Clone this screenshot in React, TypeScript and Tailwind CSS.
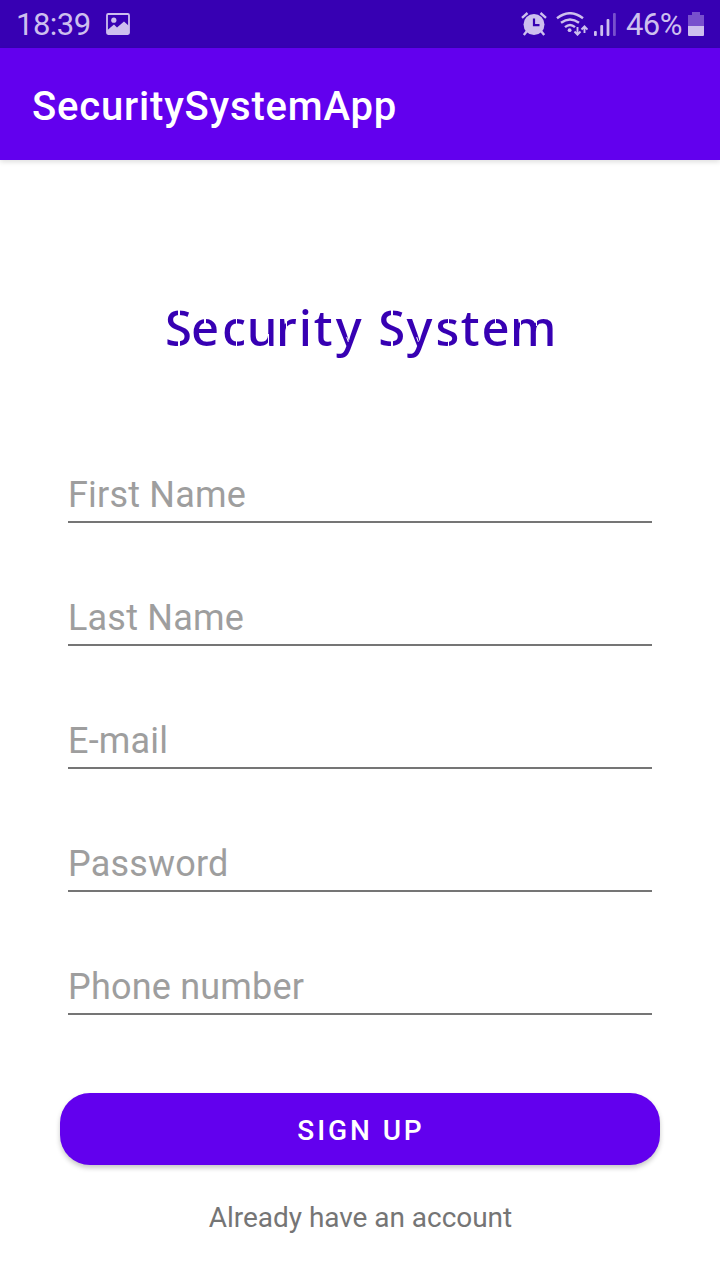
const fields = [
  { label: "First Name", type: "text" },
  { label: "Last Name", type: "text" },
  { label: "E-mail", type: "email" },
  { label: "Password", type: "password" },
  { label: "Phone number", type: "tel" },
];

type Letter = { ch: string; gap: string; cuts: string[] };

// Each letter carries its own tracking and the stencil cuts that cross it.
const title: Letter[] = [
  { ch: "S", gap: "tracking-[-0.9px]", cuts: ["left-[13px] top-[13px] h-[11px] w-[1.5px]", "left-[13px] top-[40px] h-[14px] w-[1.5px]"] },
  { ch: "e", gap: "tracking-[2.7px]", cuts: ["left-[13px] top-[22px] h-[9px] w-[1.5px]"] },
  { ch: "c", gap: "tracking-[0.8px]", cuts: ["left-[14px] top-[22px] h-[9px] w-[1.5px]", "left-[14px] top-[44px] h-[10px] w-[1.5px]"] },
  { ch: "u", gap: "tracking-[-1.4px]", cuts: ["left-[21px] top-[40px] h-[14px] w-[1px]"] },
  { ch: "r", gap: "tracking-[2px]", cuts: ["left-[10px] top-[22px] h-[12px] w-[1px]"] },
  { ch: "i", gap: "tracking-[1.7px]", cuts: [] },
  { ch: "t", gap: "tracking-[3.3px]", cuts: [] },
  { ch: "y", gap: "tracking-[0px]", cuts: ["left-[11px] top-[43px] h-[5px] w-[1px] -rotate-[20deg]"] },
  { ch: " ", gap: "tracking-[3.9px]", cuts: [] },
  { ch: "S", gap: "tracking-[1.1px]", cuts: ["left-[13px] top-[13px] h-[11px] w-[1.5px]", "left-[13px] top-[40px] h-[14px] w-[1.5px]"] },
  { ch: "y", gap: "tracking-[3.3px]", cuts: ["left-[11px] top-[43px] h-[5px] w-[1px] -rotate-[20deg]"] },
  { ch: "s", gap: "tracking-[1.3px]", cuts: ["left-[12px] top-[22px] h-[9px] w-[1.5px]", "left-[12px] top-[42px] h-[12px] w-[1.5px]"] },
  { ch: "t", gap: "tracking-[2px]", cuts: [] },
  { ch: "e", gap: "tracking-[0.3px]", cuts: ["left-[13px] top-[22px] h-[9px] w-[1.5px]"] },
  { ch: "m", gap: "tracking-[0px]", cuts: ["left-[10px] top-[22px] h-[12px] w-[1px]", "left-[26px] top-[26px] h-[6px] w-[1px]"] },
];

function PictureIcon() {
  return (
    <svg className="ml-[15px] h-6 w-6" viewBox="0 0 24 24" fill="none">
      <rect x="1" y="2" width="22" height="20" rx="1.2" stroke="#cdbfee" strokeWidth="1.8" />
      <circle cx="7.8" cy="8.2" r="2.6" fill="#cdbfee" />
      <path d="M1 18.5L5 15L8 12.500L11 15.500L18 9.500L23 14V22H1Z" fill="#cdbfee" />
    </svg>
  );
}

function AlarmIcon() {
  return (
    <svg className="h-6 w-[26px]" viewBox="0 0 26 24" fill="none">
      <path d="M6 19L2.800 23M20 19L23.200 23" stroke="#cdbfee" strokeWidth="2.4" />
      <path d="M1 5.8L6.5 1M25 5.8L19.500 1" stroke="#cdbfee" strokeWidth="2.4" />
      <circle cx="13" cy="12.500" r="10.500" fill="#cdbfee" />
      <path d="M13 6.500V13.200H18.500" stroke="#3700b3" strokeWidth="2.200" />
    </svg>
  );
}

function WifiIcon() {
  return (
    <svg className="ml-[9px] h-6 w-8" viewBox="0 0 32 24" fill="none" stroke="#cdbfee">
      <path d="M1 6.200Q14 -3.800 27 6.200M5 10.800Q14 4 23 10.800M9 15.200Q14 10.800 19 15.200" strokeWidth="2.400" />
      <circle cx="13.600" cy="18.200" r="1.900" fill="#cdbfee" stroke="none" />
      <path d="M21.500 15V22M18.500 19.500L21.500 22.700L24.500 19.500M28.500 21V14.500M25.500 17.500L28.500 14.300L31.500 17.500" strokeWidth="1.900" />
    </svg>
  );
}

function SignalIcon() {
  return (
    <svg className="ml-[6px] h-6 w-[22px]" viewBox="0 0 22 24" fill="#cdbfee">
      <rect x="0" y="19" width="2.800" height="5" rx="1" />
      <rect x="6.300" y="13" width="2.800" height="11" rx="1" />
      <rect x="12.600" y="7" width="2.800" height="17" rx="1" />
      <rect x="19" y="1" width="2.800" height="23" rx="1" fill="#7850cd" />
    </svg>
  );
}

function BatteryIcon() {
  return (
    <svg className="ml-[6px] h-6 w-4" viewBox="0 0 16 24">
      <path d="M4 0H12V3H16V14H0V3H4Z" fill="#7850cd" />
      <path d="M0 14H16V23Q16 24 15 24H1Q0 24 0 23Z" fill="#cdbfee" />
    </svg>
  );
}

export default function App() {
  return (
    <div className="flex h-[1280px] w-[720px] flex-col bg-white font-[Roboto,sans-serif]">
      <div className="flex h-12 shrink-0 items-center justify-between bg-[#3700b3] pr-4 pl-4 text-[31px] leading-[48px] text-[#cdbfee]">
        <div className="flex items-center">
          <span className="pt-[2px] tracking-[-0.5px]">18:39</span>
          <PictureIcon />
        </div>
        <div className="flex items-center">
          <AlarmIcon />
          <WifiIcon />
          <SignalIcon />
          <span className="ml-[10px] pt-[2px] tracking-[-0.5px]">46%</span>
          <BatteryIcon />
        </div>
      </div>
      <header className="flex h-28 shrink-0 items-center bg-[#6200ee] px-8 pt-[6px] shadow-[0_2px_5px_rgba(0,0,0,0.13)]">
        <h1 className="text-[40px] leading-[48px] font-medium tracking-[0.82px] text-white">SecuritySystemApp</h1>
      </header>
      <main className="flex flex-1 flex-col px-[60px]">
        <div className="mt-[129px] flex h-[76px] pl-[105px]">
          <h2 className="font-['Noto_Sans',sans-serif] text-[49px] leading-[76px] font-medium whitespace-pre text-[#3700b3]">
            {title.map((l, i) => (
              <span key={i} className={`relative ${l.gap}`}>
                {l.ch}
                {l.cuts.map((c) => (
                  <i key={c} className={`absolute bg-white ${c}`} />
                ))}
              </span>
            ))}
          </h2>
        </div>
        <form className="flex flex-col">
          <div className="mt-[104px] flex flex-col gap-[69px] px-2">
            {fields.map((f) => (
              <input
                key={f.label}
                type={f.type}
                placeholder={f.label}
                aria-label={f.label}
                className="h-[54px] w-full border-b-2 border-[#757575] bg-transparent text-[36px] tracking-[0.2px] outline-none placeholder:text-[#9e9e9e] placeholder:opacity-100"
              />
            ))}
          </div>
          <button
            type="button"
            className="mt-[78px] h-[72px] rounded-[30px] bg-[#6200ee] pt-1 pl-[2px] text-[28px] font-medium tracking-[2.900px] text-white shadow-[0_3px_5px_rgba(0,0,0,0.22)]"
          >
            SIGN UP
          </button>
        </form>
        <a className="mt-[35px] pl-px text-center text-[28px] leading-9 tracking-[-0.04px] text-[#757575]">Already have an account</a>
      </main>
    </div>
  );
}
